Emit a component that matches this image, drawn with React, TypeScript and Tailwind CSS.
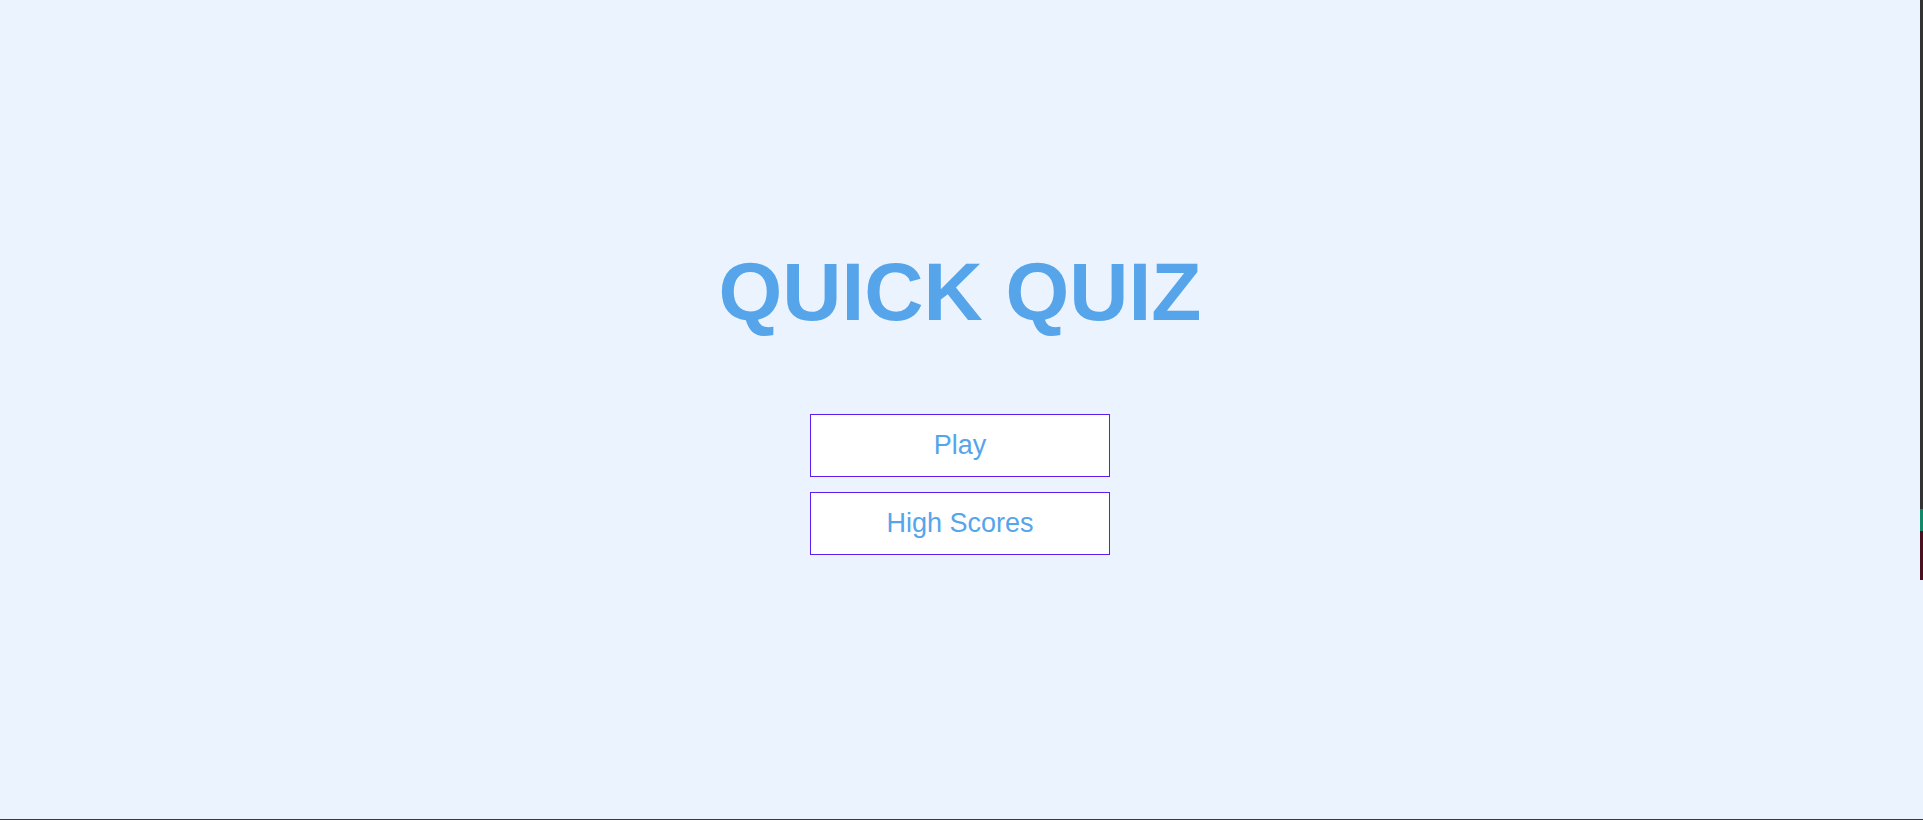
import React from "react";

const menu = ["Play", "High Scores"];

export default function App() {
  return (
    <div className="flex h-screen flex-col bg-[#ebf3fe] font-['Liberation_Sans',Arial,sans-serif]">
      <div className="flex flex-1 border-b border-[#3c3a40]">
        <main className="flex flex-1 flex-col items-center pt-[251px]">
          <h1 className="text-[82px] font-bold leading-none text-[#56a5eb]">QUICK QUIZ</h1>
          <div className="mt-[81px] flex flex-col gap-[15px]">
            {menu.map((label) => (
              <a
                key={label}
                href="#"
                className="flex h-[63px] w-[300px] items-center justify-center border border-[#5b1ef0] bg-white text-[27px] text-[#56a5eb]"
              >
                {label}
              </a>
            ))}
          </div>
        </main>
        {/* window edge strip */}
        <div className="flex w-[3px] flex-col">
          <div className="h-[509px] bg-[#333333]" />
          <div className="h-[22px] bg-[#128a6a]" />
          <div className="h-[49px] bg-[#4a1020]" />
        </div>
      </div>
    </div>
  );
}
